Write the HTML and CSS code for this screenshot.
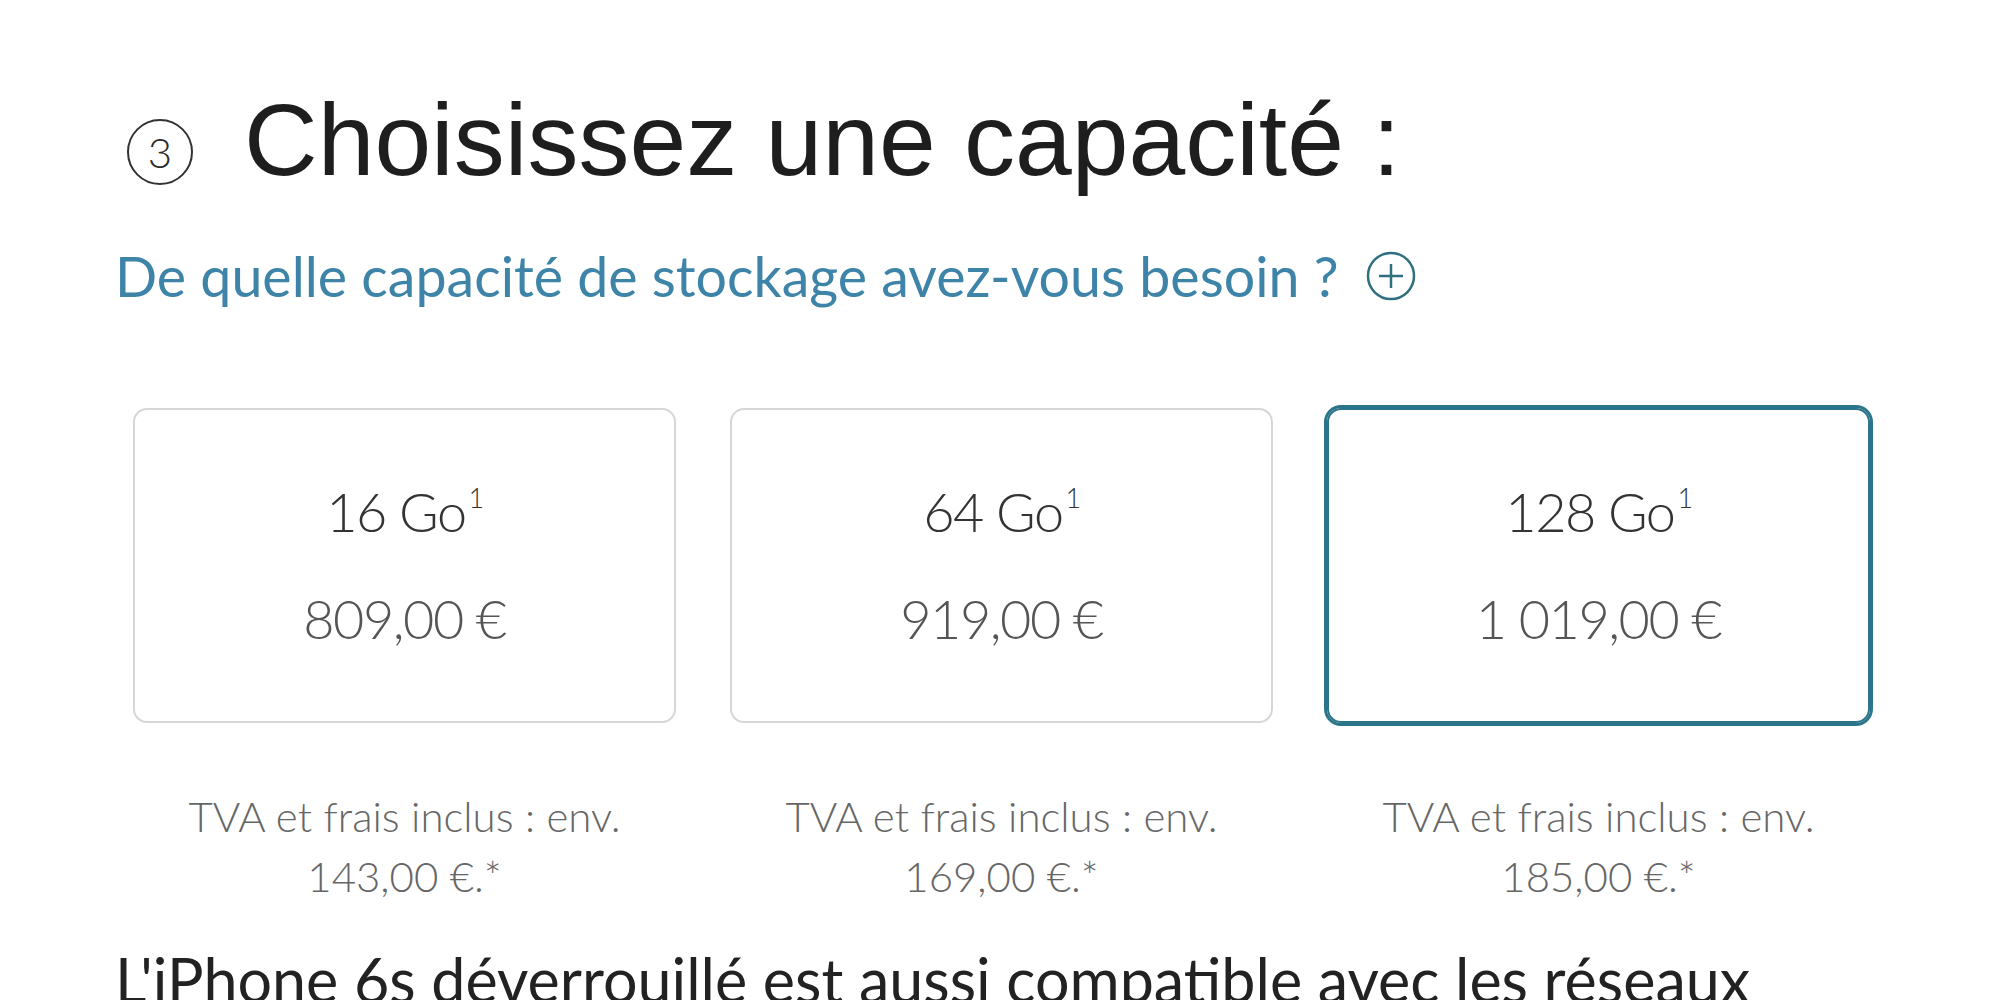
FILE: index.html
```html
<!DOCTYPE html>
<html lang="fr">
<head>
<meta charset="utf-8">
<title>Choisissez une capacité</title>
<link rel="stylesheet" href="styles.css">
</head>
<body>
<main class="page">
  <h2 class="step-title">
    <span class="step-num">3</span>
    <span class="step-text">Choisissez une capacité :</span>
  </h2>
  <p class="help">
    <span class="help-text">De quelle capacité de stockage avez-vous besoin ?</span>
    <svg class="plus" viewBox="0 0 50 50" aria-hidden="true"><circle cx="25" cy="25" r="23" fill="none" stroke="#2e6f80" stroke-width="2.5"/><path d="M25 13v24M13 25h24" stroke="#2e6f80" stroke-width="2.5" fill="none"/></svg>
  </p>
  <div class="options">
    <div class="option">
      <div class="tile">
        <span class="size">16 Go<sup>1</sup></span>
        <span class="price">809,00 €</span>
      </div>
      <p class="tax">TVA et frais inclus : env.<br>143,00 €.*</p>
    </div>
    <div class="option">
      <div class="tile">
        <span class="size">64 Go<sup>1</sup></span>
        <span class="price">919,00 €</span>
      </div>
      <p class="tax">TVA et frais inclus : env.<br>169,00 €.*</p>
    </div>
    <div class="option">
      <div class="tile selected">
        <span class="size">128 Go<sup>1</sup></span>
        <span class="price">1 019,00 €</span>
      </div>
      <p class="tax">TVA et frais inclus : env.<br>185,00 €.*</p>
    </div>
  </div>
  <p class="note">L'iPhone 6s déverrouillé est aussi compatible avec les réseaux</p>
</main>
</body>
</html>
```

FILE: styles.css
```css
html, body {
  margin: 0;
  background: #fff;
}
body {
  font-family: Lato, "Open Sans", sans-serif;
  overflow: hidden;
}
.page {
  padding: 89px 0 0 115px;
}
.step-title {
  display: flex;
  align-items: center;
  margin: 0 0 0 12px;
  font: 400 102px/1 "Liberation Sans", Arial, sans-serif;
  color: #1e1e1e;
}
.step-num {
  width: 66px;
  height: 66px;
  box-sizing: border-box;
  border: 2px solid #333;
  border-radius: 50%;
  display: flex;
  align-items: center;
  justify-content: center;
  font-family: Lato, sans-serif;
  font-weight: 300;
  font-size: 42px;
  line-height: 1;
  margin: 24px 51px 0 0;
  color: #2a2a2a;
}
.help {
  display: flex;
  align-items: center;
  margin: 57px 0 0;
  font-size: 55.5px;
  line-height: 1;
  color: #3e84a8;
}
.plus {
  width: 50px;
  height: 50px;
  margin-left: 28px;
}
.options {
  display: flex;
  gap: 54px;
  margin-top: 104px;
  padding-left: 18px;
}
.option {
  width: 543px;
}
.tile {
  height: 315px;
  box-sizing: border-box;
  border: 2px solid #d6d6d6;
  border-radius: 14px;
  display: flex;
  flex-direction: column;
  align-items: center;
  justify-content: center;
  gap: 53px;
}
.tile.selected {
  border-color: #2a7589;
  box-shadow: 0 0 0 3px #2a7589;
}
.size, .price {
  font-weight: 300;
  font-size: 54px;
  line-height: 1;
  letter-spacing: -1.5px;
}
.size {
  color: #333;
}
.price {
  color: #555;
}
.size sup {
  font-size: 27px;
  line-height: 0;
  vertical-align: 24px;
  margin-left: 3px;
}
.tax {
  margin: 63px 0 0;
  text-align: center;
  font-weight: 300;
  font-size: 42px;
  line-height: 60px;
  color: #666;
}
.note {
  margin: 43px 0 0;
  font-size: 61px;
  line-height: 1;
  color: #222;
  white-space: nowrap;
}
```
